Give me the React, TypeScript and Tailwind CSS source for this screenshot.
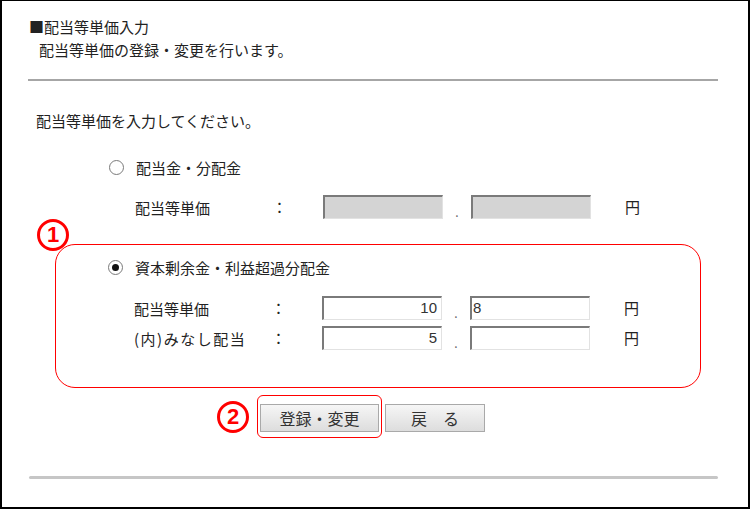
import React from "react";

const Radio = ({ checked }: { checked?: boolean }) => (
  <span className="w-[15px] h-[15px] rounded-full border border-[#7a7a7a] bg-white flex items-center justify-center shrink-0">
    {checked && <span className="w-[7px] h-[7px] rounded-full bg-[#111]" />}
  </span>
);

const Box = ({ value, align, disabled }: { value?: string; align?: "left" | "right"; disabled?: boolean }) => (
  <div
    className={`w-[120px] h-[24px] border-t-2 border-l-2 border-t-[#7a7a7a] border-l-[#7a7a7a] border-r border-b border-r-[#e2e2e2] border-b-[#e2e2e2] flex items-center font-['Liberation_Sans',sans-serif] text-[15px] text-[#333] ${
      disabled ? "bg-[#d4d4d4]" : "bg-white"
    } ${align === "right" ? "justify-end pr-[4px]" : "justify-start pl-[1px]"}`}
  >
    {value}
  </div>
);

const Row = ({ label, v1, v2, disabled, wide }: { label: string; v1?: string; v2?: string; disabled?: boolean; wide?: boolean }) => (
  <div className="flex items-center h-[24px]">
    <span className={`w-[137px] leading-[23px] whitespace-nowrap ${wide ? "tracking-[1.5px]" : ""}`}>{label}</span>
    <span className="w-[15px] text-center">：</span>
    <span className="w-[36px]" />
    <Box value={v1} align="right" disabled={disabled} />
    <span className="w-[28px] h-[24px] flex items-end justify-center pb-[1px] text-[12px] leading-none text-[#666]">.</span>
    <Box value={v2} align="left" disabled={disabled} />
    <span className="w-[34px]" />
    <span>円</span>
  </div>
);

const Num = ({ n }: { n: string }) => (
  <div className="w-[32px] h-[32px] rounded-full border-[3px] border-[#ff0000] bg-white text-[#ff0000] font-bold text-[22px] leading-none flex items-center justify-center font-['Liberation_Sans',sans-serif]">
    {n}
  </div>
);

export default function App() {
  return (
    <div className="w-[750px] h-[509px] bg-white border-black border-x-2 border-b-2 border-t overflow-hidden text-[#222] font-['Noto_Sans_CJK_JP',sans-serif] text-[15px]">
      <div className="pl-[27px] pt-[14px] leading-[23px]">
        <div>■配当等単価入力</div>
        <div className="pl-[10px]">配当等単価の登録・変更を行います。</div>
      </div>
      <div className="ml-[26px] w-[690px] h-[2px] bg-[#a6a6a6] mt-[18px]" />
      <div className="pl-[34px] mt-[28px] leading-[23px]">配当等単価を入力してください。</div>

      <div className="pl-[107px] mt-[24px] flex items-center gap-[12px] leading-[23px]">
        <Radio />
        <span>配当金・分配金</span>
      </div>
      <div className="pl-[133px] mt-[16px]">
        <Row label="配当等単価" disabled />
      </div>

      <div className="relative ml-[53px] mt-[25px] w-[646px] h-[144px] border-[1.5px] border-[#ff0000] rounded-[20px]">
        <div className="absolute left-[-19px] top-[-26px]">
          <Num n="1" />
        </div>
        <div className="pl-[52px] pt-[11px] flex items-center gap-[12px] leading-[23px]">
          <Radio checked />
          <span>資本剰余金・利益超過分配金</span>
        </div>
        <div className="pl-[78px] mt-[17px] flex flex-col gap-[6px]">
          <Row label="配当等単価" v1="10" v2="8" />
          <Row label="(内)みなし配当" v1="5" v2="" wide />
        </div>
      </div>

      <div className="pl-[215px] mt-[7px] flex items-center">
        <Num n="2" />
        <div className="ml-[8px] border-[1.5px] border-[#ff0000] rounded-[6px] px-[2px] pt-[8px] pb-[5px]">
          <button className="w-[119px] h-[28px] border border-[#a9a9a9] bg-gradient-to-b from-[#f6f6f6] to-[#dddddd] text-[16px] text-[#333] flex items-center justify-center leading-none">
            登録・変更
          </button>
        </div>
        <button className="ml-[3px] mt-[2px] w-[100px] h-[28px] border border-[#a9a9a9] bg-gradient-to-b from-[#f6f6f6] to-[#dddddd] text-[16px] text-[#333] flex items-center justify-center leading-none">
          戻　る
        </button>
      </div>

      <div className="ml-[27px] mt-[38px] w-[689px] h-[3px] bg-[#c6c6c6] rounded-full" />
    </div>
  );
}
